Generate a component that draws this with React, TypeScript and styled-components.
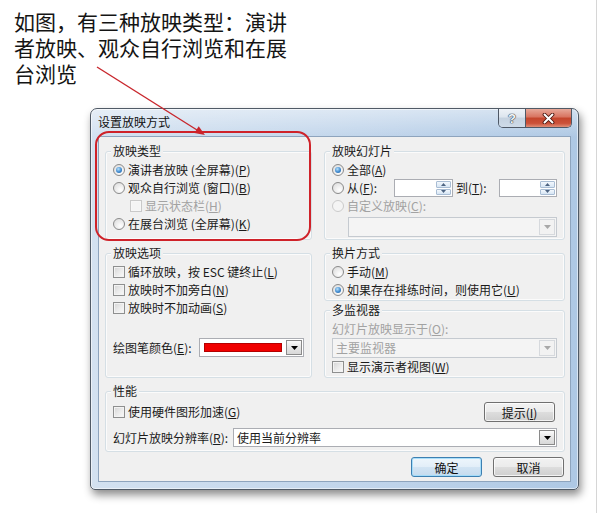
import React from "react";
import styled, { createGlobalStyle } from "styled-components";

const GlobalStyle = createGlobalStyle`
  html, body {
    margin: 0;
    padding: 0;
    background: #ffffff;
  }
  body {
    font-family: "Noto Sans CJK SC", "Noto Sans", sans-serif;
    font-size: 12px;
    color: #1b1b1b;
  }
`;

const Page = styled.div`
  position: relative;
  box-sizing: border-box;
  width: 597px;
  height: 513px;
  padding-top: 8px;
  border-right: 1px solid #d6d6d6;
  overflow: hidden;
`;

const Caption = styled.p`
  margin: 0 0 0 14px;
  font-size: 21px;
  line-height: 26px;
  color: #141414;
`;

const Window = styled.div`
  box-sizing: border-box;
  width: 489px;
  height: 382px;
  margin: 22px 0 0 90px;
  padding: 0 7px 7px;
  display: flex;
  flex-direction: column;
  border: 1px solid #505a66;
  border-radius: 7px 7px 5px 5px;
  background:
    linear-gradient(180deg, rgba(255, 255, 255, 0.45) 0px, rgba(255, 255, 255, 0) 28px),
    linear-gradient(90deg, #d3e1f0 0%, #c1d5eb 55%, #aec8e4 100%);
  box-shadow: 2px 5px 9px rgba(0, 0, 0, 0.45), inset 0 0 0 1px rgba(255, 255, 255, 0.55);
`;

const TitleBar = styled.div`
  display: flex;
  align-items: flex-start;
  height: 27px;
  margin-right: -1px;
`;

const TitleText = styled.span`
  flex: 1;
  padding-top: 6px;
  line-height: 14px;
  color: #111;
`;

const CaptionButtons = styled.div`
  display: flex;
  height: 18px;
  border: 1px solid #4e5866;
  border-top: none;
  border-radius: 0 0 5px 5px;
  overflow: hidden;
`;

const HelpButton = styled.div`
  width: 26px;
  display: flex;
  align-items: center;
  justify-content: center;
  border-right: 1px solid #4e5866;
  background: linear-gradient(180deg, #eef2f7 0%, #dde5ee 45%, #c5d2e0 50%, #cfdbe8 100%);
  font-family: "Liberation Sans", Arial, sans-serif;
  font-weight: bold;
  font-size: 13px;
  color: #f6f8fb;
  text-shadow: 0 0 1px #2d3a4a, 0 0 1px #2d3a4a, 0 0 1px #2d3a4a;
`;

const CloseButton = styled.div`
  width: 45px;
  display: flex;
  align-items: center;
  justify-content: center;
  background: linear-gradient(180deg, #e7a899 0%, #d8735f 45%, #c4452c 50%, #cc523a 80%, #e08f78 100%);
`;

const Client = styled.div`
  flex: 1;
  display: flex;
  flex-direction: column;
  padding: 7px 5px 4px 6px;
  border: 1px solid #8ea4bd;
  background: #f0f0f0;
`;

const Columns = styled.div`
  display: grid;
  grid-template-columns: 207px 241px;
  column-gap: 12px;
  align-items: start;
`;

const Column = styled.div`
  display: flex;
  flex-direction: column;
`;

const GroupBox = styled.div<{ $h: number; $mt: number }>`
  box-sizing: border-box;
  height: ${(p) => p.$h}px;
  margin-top: ${(p) => p.$mt}px;
  padding: 0 7px;
  border: 1px solid #d5dfe5;
  border-radius: 3px;
  box-shadow: inset 0 0 0 1px rgba(255, 255, 255, 0.7);
`;

const GroupTitle = styled.div`
  width: fit-content;
  margin: -8px 0 0 -2px;
  padding: 0 2px;
  line-height: 14px;
  background: #f0f0f0;
`;

const Rows = styled.div<{ $mt?: number }>`
  display: flex;
  flex-direction: column;
  margin-top: ${(p) => p.$mt ?? 3}px;
`;

const Row = styled.div<{ $indent?: number; $disabled?: boolean; $h?: number }>`
  display: flex;
  align-items: center;
  height: ${(p) => p.$h ?? 18}px;
  padding-left: ${(p) => p.$indent ?? 0}px;
  line-height: 18px;
  white-space: nowrap;
  color: ${(p) => (p.$disabled ? "#a2a2a2" : "#1b1b1b")};
`;

const Accel = styled.span`
  text-decoration: underline;
`;

const RadioMark = styled.span<{ $disabled?: boolean }>`
  box-sizing: border-box;
  flex: none;
  width: 12px;
  height: 12px;
  margin-right: 3px;
  display: inline-flex;
  align-items: center;
  justify-content: center;
  border-radius: 50%;
  border: 1px solid ${(p) => (p.$disabled ? "#cbcbcb" : "#8a8a8a")};
  background: ${(p) =>
    p.$disabled ? "#f4f4f4" : "radial-gradient(circle at 65% 70%, #ffffff 0%, #dadada 95%)"};
`;

const RadioDot = styled.span`
  width: 6px;
  height: 6px;
  border-radius: 50%;
  background: radial-gradient(circle at 40% 35%, #b8e2fb 0%, #3f8ad0 55%, #1c5896 100%);
`;

const CheckMark = styled.span<{ $disabled?: boolean }>`
  box-sizing: border-box;
  flex: none;
  width: 12px;
  height: 12px;
  margin-right: 3px;
  border: 1px solid ${(p) => (p.$disabled ? "#c9c9c9" : "#8e8f8f")};
  background: ${(p) =>
    p.$disabled ? "#f4f4f4" : "linear-gradient(135deg, #d4d4d4 0%, #ececec 55%, #fafafa 100%)"};
  box-shadow: inset 0 0 0 1px ${(p) => (p.$disabled ? "#f7f7f7" : "#f3f3f3")};
`;

const FieldLabel = styled.span<{ $w: number }>`
  width: ${(p) => p.$w}px;
  flex: none;
`;

const SpinBox = styled.div<{ $w: number }>`
  box-sizing: border-box;
  width: ${(p) => p.$w}px;
  height: 18px;
  display: flex;
  justify-content: flex-end;
  padding: 1px;
  border: 1px solid #abadb3;
  background: #ffffff;
`;

const SpinButtons = styled.div`
  width: 15px;
  display: flex;
  flex-direction: column;
  gap: 1px;
`;

const SpinHalf = styled.div`
  flex: 1;
  display: flex;
  align-items: center;
  justify-content: center;
  border: 1px solid #a9bdd4;
  border-radius: 1px;
  background: linear-gradient(180deg, #f3f8fd 0%, #d6e5f4 100%);
`;

const Combo = styled.div<{ $w?: number; $h?: number; $disabled?: boolean; $indent?: number }>`
  box-sizing: border-box;
  display: flex;
  align-items: stretch;
  width: ${(p) => (p.$w ? `${p.$w}px` : "auto")};
  height: ${(p) => p.$h ?? 19}px;
  margin-left: ${(p) => p.$indent ?? 0}px;
  padding: 1px;
  border: 1px solid ${(p) => (p.$disabled ? "#c5cad0" : "#abadb3")};
  background: ${(p) => (p.$disabled ? "#f4f4f4" : "#ffffff")};
`;

const ComboText = styled.div<{ $disabled?: boolean }>`
  flex: 1;
  padding-left: 2px;
  line-height: 15px;
  color: ${(p) => (p.$disabled ? "#a2a2a2" : "#1b1b1b")};
  white-space: nowrap;
`;

const Swatch = styled.div`
  flex: 1;
  margin: 3px 4px 3px 3px;
  background: #f00000;
  border: 1px solid #b40000;
`;

const DropButton = styled.div<{ $disabled?: boolean }>`
  box-sizing: border-box;
  width: 16px;
  display: flex;
  align-items: center;
  justify-content: center;
  border: 1px solid ${(p) => (p.$disabled ? "#d6d9dd" : "#8a8a8a")};
  background: ${(p) =>
    p.$disabled ? "#f2f2f2" : "linear-gradient(180deg, #fbfbfb 0%, #e6e6e6 50%, #d8d8d8 100%)"};
`;

const PenRow = styled(Row)`
  height: 19px;
  margin-top: 21px;
  justify-content: space-between;
`;

const PerfTop = styled.div`
  display: flex;
  align-items: center;
  justify-content: space-between;
  height: 20px;
  margin: 4px 2px 0 0;
`;

const PerfBottom = styled.div`
  display: flex;
  align-items: center;
  justify-content: space-between;
  height: 19px;
  margin-top: 6px;
  white-space: nowrap;
`;

const ButtonRow = styled.div`
  display: flex;
  justify-content: flex-end;
  gap: 11px;
  margin: 5px 1px 0 0;
`;

const PushButton = styled.button<{ $default?: boolean }>`
  box-sizing: border-box;
  width: 71px;
  height: 20px;
  padding: 0;
  font: inherit;
  font-size: 12px;
  line-height: 17px;
  color: #111;
  border: 1px solid ${(p) => (p.$default ? "#3c7fb1" : "#707070")};
  border-radius: 3px;
  background: ${(p) =>
    p.$default
      ? "linear-gradient(180deg, #eef6fc 0%, #e2eef8 50%, #d2e4f3 51%, #c5dbee 100%)"
      : "linear-gradient(180deg, #f2f2f2 0%, #ebebeb 50%, #dddddd 51%, #cfcfcf 100%)"};
  box-shadow: inset 0 0 0 1px ${(p) => (p.$default ? "rgba(160, 220, 250, 0.9)" : "rgba(255, 255, 255, 0.75)")};
`;

const Annotations = styled.svg`
  position: absolute;
  left: 0;
  top: 0;
  width: 600px;
  height: 513px;
  pointer-events: none;
`;

function DownArrow({ color = "#000" }: { color?: string }) {
  return (
    <svg width="7" height="4" viewBox="0 0 7 4">
      <polygon points="0,0 7,0 3.5,4" fill={color} />
    </svg>
  );
}

function Radio({ checked, disabled }: { checked?: boolean; disabled?: boolean }) {
  return <RadioMark $disabled={disabled}>{checked && <RadioDot />}</RadioMark>;
}

function Spin({ w }: { w: number }) {
  return (
    <SpinBox $w={w}>
      <SpinButtons>
        <SpinHalf>
          <svg width="5" height="3" viewBox="0 0 5 3">
            <polygon points="0,3 5,3 2.5,0" fill="#4d6482" />
          </svg>
        </SpinHalf>
        <SpinHalf>
          <svg width="5" height="3" viewBox="0 0 5 3">
            <polygon points="0,0 5,0 2.5,3" fill="#4d6482" />
          </svg>
        </SpinHalf>
      </SpinButtons>
    </SpinBox>
  );
}

export default function App() {
  return (
    <Page>
      <GlobalStyle />
      <Caption>
        如图，有三种放映类型：演讲
        <br />
        者放映、观众自行浏览和在展
        <br />
        台浏览
      </Caption>

      <Window>
        <TitleBar>
          <TitleText>设置放映方式</TitleText>
          <CaptionButtons>
            <HelpButton>?</HelpButton>
            <CloseButton>
              <svg width="13" height="11" viewBox="0 0 13 11">
                <path d="M2.5 1.5 L10.5 9.5 M10.5 1.5 L2.5 9.5" stroke="#4a150d" strokeWidth="3.8" strokeLinecap="round" />
                <path d="M2.5 1.5 L10.5 9.5 M10.5 1.5 L2.5 9.5" stroke="#ffffff" strokeWidth="2" strokeLinecap="round" />
              </svg>
            </CloseButton>
          </CaptionButtons>
        </TitleBar>

        <Client>
          <Columns>
            <Column>
              <GroupBox $h={89} $mt={7}>
                <GroupTitle>放映类型</GroupTitle>
                <Rows>
                  <Row>
                    <Radio checked />
                    演讲者放映 (全屏幕)(<Accel>P</Accel>)
                  </Row>
                  <Row>
                    <Radio />
                    观众自行浏览 (窗口)(<Accel>B</Accel>)
                  </Row>
                  <Row $indent={17} $disabled>
                    <CheckMark $disabled />
                    显示状态栏(<Accel>H</Accel>)
                  </Row>
                  <Row>
                    <Radio />
                    在展台浏览 (全屏幕)(<Accel>K</Accel>)
                  </Row>
                </Rows>
              </GroupBox>

              <GroupBox $h={125} $mt={13}>
                <GroupTitle>放映选项</GroupTitle>
                <Rows>
                  <Row>
                    <CheckMark />
                    循环放映，按 ESC 键终止(<Accel>L</Accel>)
                  </Row>
                  <Row>
                    <CheckMark />
                    放映时不加旁白(<Accel>N</Accel>)
                  </Row>
                  <Row>
                    <CheckMark />
                    放映时不加动画(<Accel>S</Accel>)
                  </Row>
                </Rows>
                <PenRow>
                  <span>
                    绘图笔颜色(<Accel>E</Accel>):
                  </span>
                  <Combo $w={105}>
                    <Swatch />
                    <DropButton>
                      <DownArrow />
                    </DropButton>
                  </Combo>
                </PenRow>
              </GroupBox>
            </Column>

            <Column>
              <GroupBox $h={89} $mt={7}>
                <GroupTitle>放映幻灯片</GroupTitle>
                <Rows>
                  <Row>
                    <Radio checked />
                    全部(<Accel>A</Accel>)
                  </Row>
                  <Row>
                    <Radio />
                    <FieldLabel $w={47}>
                      从(<Accel>F</Accel>):
                    </FieldLabel>
                    <Spin w={59} />
                    <FieldLabel $w={46} style={{ paddingLeft: 3, boxSizing: "border-box" }}>
                      到(<Accel>T</Accel>):
                    </FieldLabel>
                    <Spin w={58} />
                  </Row>
                  <Row $disabled>
                    <Radio disabled />
                    自定义放映(<Accel>C</Accel>):
                  </Row>
                </Rows>
                <Combo $h={20} $indent={16} $disabled style={{ marginTop: 2 }}>
                  <ComboText $disabled />
                  <DropButton $disabled>
                    <DownArrow color="#a8a8a8" />
                  </DropButton>
                </Combo>
              </GroupBox>

              <GroupBox $h={48} $mt={13}>
                <GroupTitle>换片方式</GroupTitle>
                <Rows>
                  <Row>
                    <Radio />
                    手动(<Accel>M</Accel>)
                  </Row>
                  <Row>
                    <Radio checked />
                    如果存在排练时间，则使用它(<Accel>U</Accel>)
                  </Row>
                </Rows>
              </GroupBox>

              <GroupBox $h={68} $mt={9}>
                <GroupTitle>多监视器</GroupTitle>
                <Rows>
                  <Row $disabled>
                    幻灯片放映显示于(<Accel>O</Accel>):
                  </Row>
                </Rows>
                <Combo $h={20} $disabled>
                  <ComboText $disabled>主要监视器</ComboText>
                  <DropButton $disabled>
                    <DownArrow color="#a8a8a8" />
                  </DropButton>
                </Combo>
                <Row>
                  <CheckMark />
                  显示演示者视图(<Accel>W</Accel>)
                </Row>
              </GroupBox>
            </Column>
          </Columns>

          <GroupBox $h={61} $mt={13}>
            <GroupTitle>性能</GroupTitle>
            <PerfTop>
              <Row>
                <CheckMark />
                使用硬件图形加速(<Accel>G</Accel>)
              </Row>
              <PushButton>
                提示(<Accel>I</Accel>)
              </PushButton>
            </PerfTop>
            <PerfBottom>
              <span>
                幻灯片放映分辨率(<Accel>R</Accel>):
              </span>
              <Combo $w={324}>
                <ComboText>使用当前分辨率</ComboText>
                <DropButton>
                  <DownArrow />
                </DropButton>
              </Combo>
            </PerfBottom>
          </GroupBox>

          <ButtonRow>
            <PushButton $default>确定</PushButton>
            <PushButton>取消</PushButton>
          </ButtonRow>
        </Client>
      </Window>

      <Annotations viewBox="0 0 600 513">
        <line x1="97" y1="67" x2="197" y2="130" stroke="#c8262c" strokeWidth="1.4" />
        <polygon points="205,135 194.4,133.1 198.7,126.3" fill="#c8262c" />
        <rect x="96" y="132" width="214" height="108" rx="13" fill="none" stroke="#cf2229" strokeWidth="2" />
      </Annotations>
    </Page>
  );
}
